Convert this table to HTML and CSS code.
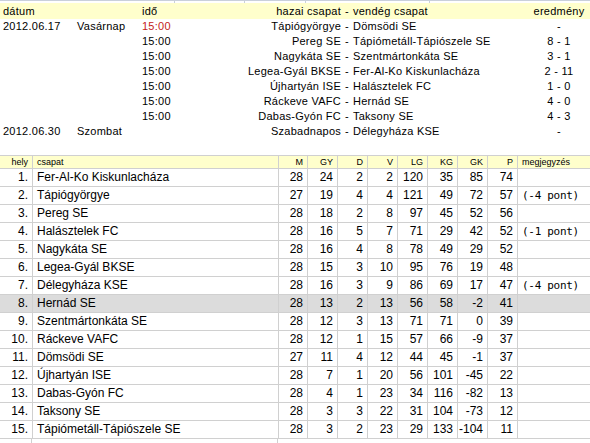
FILE: index.html
```html
<!DOCTYPE html>
<html lang="hu">
<head>
<meta charset="utf-8">
<title>Eredmények</title>
<link rel="stylesheet" href="styles.css">
</head>
<body>
<div class="ticks top-ticks"><span class="t1"></span><span class="t2"></span><span class="t3"></span><span class="t4"></span></div>
<div class="fixtures">
  <div class="frow fhead">
    <span class="c-date">dátum</span><span></span><span>idő</span><span class="home">hazai csapat</span><span class="sep">-</span><span>vendég csapat</span><span class="score">eredmény</span>
  </div>
  <div class="frow">
    <span class="c-date">2012.06.17</span><span class="day">Vasárnap</span><span class="red">15:00</span><span class="home">Tápiógyörgye</span><span class="sep">-</span><span>Dömsödi SE</span><span class="score">-</span>
  </div>
  <div class="frow">
    <span class="c-date"></span><span></span><span>15:00</span><span class="home">Pereg SE</span><span class="sep">-</span><span>Tápiómetáll-Tápiószele SE</span><span class="score">8 - 1</span>
  </div>
  <div class="frow">
    <span class="c-date"></span><span></span><span>15:00</span><span class="home">Nagykáta SE</span><span class="sep">-</span><span>Szentmártonkáta SE</span><span class="score">3 - 1</span>
  </div>
  <div class="frow">
    <span class="c-date"></span><span></span><span>15:00</span><span class="home">Legea-Gyál BKSE</span><span class="sep">-</span><span>Fer-Al-Ko Kiskunlacháza</span><span class="score">2 - 11</span>
  </div>
  <div class="frow">
    <span class="c-date"></span><span></span><span>15:00</span><span class="home">Újhartyán ISE</span><span class="sep">-</span><span>Halásztelek FC</span><span class="score">1 - 0</span>
  </div>
  <div class="frow">
    <span class="c-date"></span><span></span><span>15:00</span><span class="home">Ráckeve VAFC</span><span class="sep">-</span><span>Hernád SE</span><span class="score">4 - 0</span>
  </div>
  <div class="frow">
    <span class="c-date"></span><span></span><span>15:00</span><span class="home">Dabas-Gyón FC</span><span class="sep">-</span><span>Taksony SE</span><span class="score">4 - 3</span>
  </div>
  <div class="frow">
    <span class="c-date">2012.06.30</span><span class="day">Szombat</span><span></span><span class="home">Szabadnapos</span><span class="sep">-</span><span>Délegyháza KSE</span><span class="score">-</span>
  </div>
</div>

<div class="standings">
  <div class="srow shead">
    <span class="num">hely</span><span class="name">csapat</span><span class="num">M</span><span class="num">GY</span><span class="num">D</span><span class="num">V</span><span class="num">LG</span><span class="num">KG</span><span class="num">GK</span><span class="num">P</span><span class="note">megjegyzés</span>
  </div>
  <div class="srow"><span class="num">1.</span><span class="name">Fer-Al-Ko Kiskunlacháza</span><span class="num">28</span><span class="num">24</span><span class="num">2</span><span class="num">2</span><span class="num">120</span><span class="num">35</span><span class="num">85</span><span class="num">74</span><span class="note"></span></div>
  <div class="srow"><span class="num">2.</span><span class="name">Tápiógyörgye</span><span class="num">27</span><span class="num">19</span><span class="num">4</span><span class="num">4</span><span class="num">121</span><span class="num">49</span><span class="num">72</span><span class="num">57</span><span class="note mono">(-4 pont)</span></div>
  <div class="srow"><span class="num">3.</span><span class="name">Pereg SE</span><span class="num">28</span><span class="num">18</span><span class="num">2</span><span class="num">8</span><span class="num">97</span><span class="num">45</span><span class="num">52</span><span class="num">56</span><span class="note"></span></div>
  <div class="srow"><span class="num">4.</span><span class="name">Halásztelek FC</span><span class="num">28</span><span class="num">16</span><span class="num">5</span><span class="num">7</span><span class="num">71</span><span class="num">29</span><span class="num">42</span><span class="num">52</span><span class="note mono">(-1 pont)</span></div>
  <div class="srow"><span class="num">5.</span><span class="name">Nagykáta SE</span><span class="num">28</span><span class="num">16</span><span class="num">4</span><span class="num">8</span><span class="num">78</span><span class="num">49</span><span class="num">29</span><span class="num">52</span><span class="note"></span></div>
  <div class="srow"><span class="num">6.</span><span class="name">Legea-Gyál BKSE</span><span class="num">28</span><span class="num">15</span><span class="num">3</span><span class="num">10</span><span class="num">95</span><span class="num">76</span><span class="num">19</span><span class="num">48</span><span class="note"></span></div>
  <div class="srow"><span class="num">7.</span><span class="name">Délegyháza KSE</span><span class="num">28</span><span class="num">16</span><span class="num">3</span><span class="num">9</span><span class="num">86</span><span class="num">69</span><span class="num">17</span><span class="num">47</span><span class="note mono">(-4 pont)</span></div>
  <div class="srow hl"><span class="num">8.</span><span class="name">Hernád SE</span><span class="num">28</span><span class="num">13</span><span class="num">2</span><span class="num">13</span><span class="num">56</span><span class="num">58</span><span class="num">-2</span><span class="num">41</span><span class="note"></span></div>
  <div class="srow"><span class="num">9.</span><span class="name">Szentmártonkáta SE</span><span class="num">28</span><span class="num">12</span><span class="num">3</span><span class="num">13</span><span class="num">71</span><span class="num">71</span><span class="num">0</span><span class="num">39</span><span class="note"></span></div>
  <div class="srow"><span class="num">10.</span><span class="name">Ráckeve VAFC</span><span class="num">28</span><span class="num">12</span><span class="num">1</span><span class="num">15</span><span class="num">57</span><span class="num">66</span><span class="num">-9</span><span class="num">37</span><span class="note"></span></div>
  <div class="srow"><span class="num">11.</span><span class="name">Dömsödi SE</span><span class="num">27</span><span class="num">11</span><span class="num">4</span><span class="num">12</span><span class="num">44</span><span class="num">45</span><span class="num">-1</span><span class="num">37</span><span class="note"></span></div>
  <div class="srow"><span class="num">12.</span><span class="name">Újhartyán ISE</span><span class="num">28</span><span class="num">7</span><span class="num">1</span><span class="num">20</span><span class="num">56</span><span class="num">101</span><span class="num">-45</span><span class="num">22</span><span class="note"></span></div>
  <div class="srow"><span class="num">13.</span><span class="name">Dabas-Gyón FC</span><span class="num">28</span><span class="num">4</span><span class="num">1</span><span class="num">23</span><span class="num">34</span><span class="num">116</span><span class="num">-82</span><span class="num">13</span><span class="note"></span></div>
  <div class="srow"><span class="num">14.</span><span class="name">Taksony SE</span><span class="num">28</span><span class="num">3</span><span class="num">3</span><span class="num">22</span><span class="num">31</span><span class="num">104</span><span class="num">-73</span><span class="num">12</span><span class="note"></span></div>
  <div class="srow"><span class="num">15.</span><span class="name">Tápiómetáll-Tápiószele SE</span><span class="num">28</span><span class="num">3</span><span class="num">2</span><span class="num">23</span><span class="num">29</span><span class="num">133</span><span class="num">-104</span><span class="num">11</span><span class="note"></span></div>
</div>
<div class="ticks bottom-ticks"><span class="b1"></span><span class="b2"></span></div>
</body>
</html>
```
FILE: styles.css
```css
html, body {
  margin: 0;
  padding: 0;
  background: #fff;
  color: #000;
  width: 590px;
  overflow: hidden;
}

.ticks {
  display: flex;
  height: 3px;
}
.top-ticks {
  border-top: 1px solid #c9d0da;
  height: 2px;
}
.ticks span {
  display: block;
  height: 100%;
  border-right: 1px solid #c9d0da;
}
.top-ticks .t1 { width: 174px; }
.top-ticks .t2 { width: 69px; }
.top-ticks .t3 { width: 60px; }
.top-ticks .t4 { width: 123px; }

.fixtures {
  font-family: "Liberation Sans", Arial, sans-serif;
  font-size: 11px;
  letter-spacing: 0.25px;
  margin-bottom: 16px;
}
.frow {
  display: grid;
  grid-template-columns: 77px 65px 58px 141px 12px 175px 1fr;
  height: 15px;
  line-height: 15px;
  white-space: nowrap;
}
.fhead {
  background: #ffffcc;
  height: 16px;
  line-height: 16px;
}
.c-date { padding-left: 3px; }
.home { text-align: right; }
.sep { text-align: center; }
.score { text-align: center; }
.red { color: #c41b1b; }

.standings {
  font-family: "Liberation Sans", Arial, sans-serif;
  font-size: 12px;
  border-top: 1px solid #d0d0d0;
}
.srow {
  display: grid;
  grid-template-columns: 32px 246px 29px repeat(7, 30px) 1fr;
  height: 17px;
  line-height: 17px;
  border-bottom: 1px solid #d0d0d0;
  white-space: nowrap;
}
.srow span + span { border-left: 1px solid #d0d0d0; }
.srow .num { text-align: right; padding-right: 4px; }
.srow .name { padding-left: 4px; }
.srow .note { padding-left: 4px; }
.srow .mono { font-family: "DejaVu Sans Mono", monospace; font-size: 11px; letter-spacing: -0.3px; }
.shead {
  background: #ffffcc;
  height: 12px;
  line-height: 12px;
  font-size: 9px;
}
.hl { background: #dcdcdc; }

.bottom-ticks { height: 6px; }
.bottom-ticks .b1 { width: 31px; }
.bottom-ticks .b2 { width: 245px; }
.bottom-ticks span { border-right-color: #d0d0d0; }
```
